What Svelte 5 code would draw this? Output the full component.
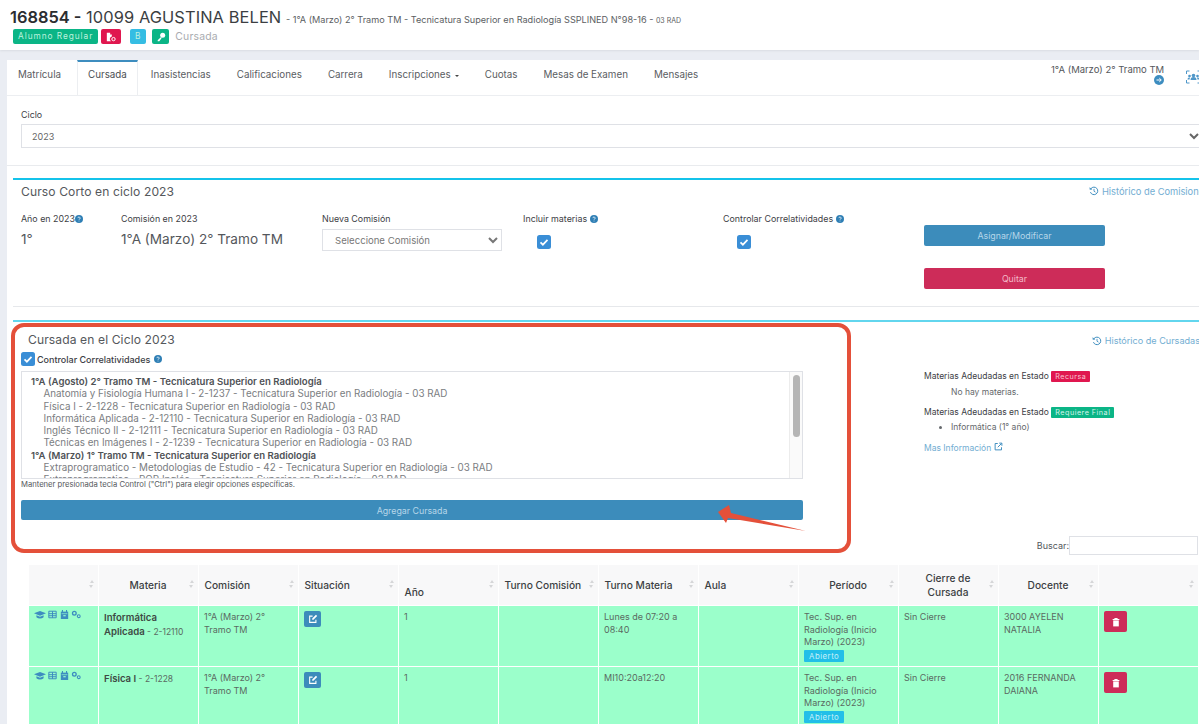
<script>
  const tabs = ['Matrícula','Cursada','Inasistencias','Calificaciones','Carrera','Inscripciones','Cuotas','Mesas de Examen','Mensajes'];
  const groups = [
    ['1°A (Agosto) 2° Tramo TM - Tecnicatura Superior en Radiología', [
      'Anatomía y Fisiología Humana I - 2-1237 - Tecnicatura Superior en Radiología - 03 RAD',
      'Física I - 2-1228 - Tecnicatura Superior en Radiología - 03 RAD',
      'Informática Aplicada - 2-12110 - Tecnicatura Superior en Radiología - 03 RAD',
      'Inglés Técnico II - 2-12111 - Tecnicatura Superior en Radiología - 03 RAD',
      'Técnicas en Imágenes I - 2-1239 - Tecnicatura Superior en Radiología - 03 RAD']],
    ['1°A (Marzo) 1° Tramo TM - Tecnicatura Superior en Radiología', [
      'Extraprogramatico - Metodologias de Estudio - 42 - Tecnicatura Superior en Radiología - 03 RAD',
      'Extraprogramatico - ROP Inglés - Tecnicatura Superior en Radiología - 03 RAD']]
  ];
  const heads = ['', 'Materia', 'Comisión', 'Situación', 'Año', 'Turno Comisión', 'Turno Materia', 'Aula', 'Período', 'Cierre de Cursada', 'Docente', ''];
  const rows = [
    { m: 'Informática', m2: 'Aplicada', code: '2-12110', turno: 'Lunes de 07:20 a 08:40', doc: '3000 AYELEN NATALIA' },
    { m: 'Física I', m2: '', code: '2-1228', turno: 'MI10:20a12:20', doc: '2016 FERNANDA DAIANA' }
  ];
</script>

{#snippet help()}
  <svg class="help" viewBox="0 0 16 16"><circle cx="8" cy="8" r="8" fill="#2f7fb5"/><path d="M5.800 6.200a2.200 2.200 0 1 1 3.300 1.900c-.7.400-1 .7-1 1.500M8 11.400v1.400" stroke="#fff" stroke-width="1.600" fill="none"/></svg>
{/snippet}
{#snippet check()}
  <svg class="check" viewBox="0 0 14 14"><rect width="14" height="14" rx="2.500" fill="#3a8ed6"/><path d="M3.500 7.400l2.400 2.300 4.600-4.800" stroke="#fff" stroke-width="1.700" fill="none"/></svg>
{/snippet}
{#snippet history()}
  <svg class="hist" viewBox="0 0 16 16"><path d="M3.200 4.200A6 6 0 1 1 2.300 9.800" stroke="#3d8dbf" stroke-width="1.600" fill="none"/><path d="M.8 1.800l.4 4.200 4.200-.4z" fill="#3d8dbf"/><path d="M8 4.600v3.800l2.400 1.400" stroke="#3d8dbf" stroke-width="1.400" fill="none"/></svg>
{/snippet}

<div class="page">
  <header class="top">
    <div class="title"><b>168854 -</b> <span class="name">10099 AGUSTINA BELEN</span> <small>- 1°A (Marzo) 2° Tramo TM - Tecnicatura Superior en Radiología SSPLINED N°98-16 - <em>03 RAD</em></small></div>
    <div class="badges">
      <span class="bdg green">Alumno Regular</span>
      <span class="bdg red ic"><svg viewBox="0 0 12 12" width="10" height="10"><path d="M1 1h4v2h2v2.500a3 3 0 0 0-1 5.500H1z" fill="#fff"/><circle cx="9" cy="8.500" r="2" fill="none" stroke="#fff" stroke-width="1.200"/></svg></span>
      <span class="bdg cyan">B</span>
      <span class="bdg green ic key"><svg viewBox="0 0 12 12" width="10" height="10"><circle cx="8" cy="4" r="3" fill="#fff"/><path d="M6 6L2 10v1h2l3-4z" fill="#fff"/></svg></span>
      <span class="crumb">Cursada</span>
    </div>
  </header>

  <main class="card">
    <nav class="tabs">
      {#each tabs as t, i}
        <span class="tab" class:active={i === 1}>{t}{#if t === 'Inscripciones'}<i class="caret"></i>{/if}</span>
      {/each}
      <div class="tabside">
        <div class="ctx">1°A (Marzo) 2° Tramo TM
          <svg class="go" viewBox="0 0 12 12"><circle cx="6" cy="6" r="6" fill="#3d8dc0"/><path d="M3 6h5.500M6.400 3.800L8.700 6 6.400 8.200" stroke="#fff" stroke-width="1.200" fill="none"/></svg>
        </div>
        <svg class="scan" viewBox="0 0 16 14"><path d="M1 4V1h3M12 1h3v3M15 10v3h-3M4 13H1v-3" stroke="#4f97c9" stroke-width="1" fill="none"/><circle cx="8" cy="5.500" r="1.800" fill="#4f97c9"/><circle cx="4" cy="6" r="1.300" fill="#4f97c9"/><circle cx="12" cy="6" r="1.300" fill="#4f97c9"/><path d="M5 10a3 3 0 0 1 6 0zM2 9.500a2 2 0 0 1 2.500-2L4 9.500zM14 9.500a2 2 0 0 0-2.500-2l.5 2z" fill="#4f97c9"/></svg>
      </div>
    </nav>

    <section class="ciclo">
      <label class="lab" for="ciclo">Ciclo</label>
      <select id="ciclo" class="wide"><option>2023</option></select>
    </section>

    <section class="panel short">
      <div class="panelhead"><h3>Curso Corto en ciclo 2023</h3><a class="link over">{@render history()} Histórico de Comisiones</a></div>
      <div class="formgrid">
        <div><div class="lab">Año en 2023{@render help()}</div><div class="val">1°</div></div>
        <div><div class="lab">Comisión en 2023</div><div class="val">1°A (Marzo) 2° Tramo TM</div></div>
        <div><div class="lab">Nueva Comisión</div><select class="sel"><option>Seleccione Comisión</option></select></div>
        <div><div class="lab">Incluir materias {@render help()}</div><div class="ck1">{@render check()}</div></div>
        <div><div class="lab">Controlar Correlatividades {@render help()}</div><div class="ck2">{@render check()}</div></div>
        <div class="actions"><button class="btn blue">Asignar/Modificar</button><button class="btn crimson">Quitar</button></div>
      </div>
    </section>

    <section class="panel cursada">
      <div class="left">
        <h3>Cursada en el Ciclo 2023</h3>
        <div class="lab strong">{@render check()} Controlar Correlatividades {@render help()}</div>
        <div class="list">
          {#each groups as g}
            <div class="grp">{g[0]}</div>
            {#each g[1] as o}<div class="opt">{o}</div>{/each}
          {/each}
          <div class="track"><div class="thumb"></div></div>
        </div>
        <p class="hint">Mantener presionada tecla Control ("Ctrl") para elegir opciones específicas.</p>
        <button class="btn blue add">Agregar Cursada</button>
      </div>
      <div class="right">
        <a class="link histc">{@render history()} Histórico de Cursadas</a>
        <div class="adeu first">Materias Adeudadas en Estado <span class="tag red">Recursa</span></div>
        <div class="none">No hay materias.</div>
        <div class="adeu">Materias Adeudadas en Estado <span class="tag green">Requiere Final</span></div>
        <ul><li>Informática (1° año)</li></ul>
        <a class="link more">Mas Información <svg viewBox="0 0 12 12" width="9" height="9"><path d="M5 2H1.500v8.500H10V7" stroke="#3d8dbf" stroke-width="1.300" fill="none"/><path d="M5 7l5-5M7 1.500h3.500V5" stroke="#3d8dbf" stroke-width="1.300" fill="none"/></svg></a>
      </div>
    </section>

    <div class="search"><span>Buscar:</span><input aria-label="Buscar" /></div>

    <table>
      <thead>
        <tr>
          {#each heads as h, i}
            <th class:low={i === 4} class:lefted={i >= 2 && i <= 7}>{h}<i class="sort"></i></th>
          {/each}
        </tr>
      </thead>
      <tbody>
        {#each rows as r}
          <tr>
            <td class="icons">
              <svg viewBox="0 0 15 11" width="12" height="9"><path d="M7.500 1L15 4 7.500 7 0 4z" fill="#3d8dc0"/><path d="M3 6.500v2.500c2.500 2 6.500 2 9 0V6.500L7.500 8.200z" fill="#3d8dc0"/></svg>
              <svg viewBox="0 0 11 11" width="9" height="9"><path d="M1 1.500h9v8H1zM1 4.500h9M1 7h9M5.500 1.500v8" stroke="#3d8dc0" stroke-width="1.200" fill="none"/></svg>
              <svg viewBox="0 0 11 11" width="9" height="9"><path d="M1 2h9v9H1z" fill="#3d8dc0"/><path d="M3 0v3M8 0v3" stroke="#3d8dc0" stroke-width="1.300"/><path d="M2 4.500h7" stroke="#9fc" stroke-width=".8"/><path d="M4 7h3" stroke="#9fc" stroke-width="1.400"/></svg>
              <svg viewBox="0 0 12 10" width="10" height="9"><circle cx="4" cy="3.500" r="2.200" fill="none" stroke="#3d8dc0" stroke-width="1.600"/><circle cx="9.300" cy="7" r="1.700" fill="none" stroke="#3d8dc0" stroke-width="1.300"/></svg>
            </td>
            <td><b>{r.m}</b>{#if r.m2}<br /><b>{r.m2}</b>{/if}<span class="code">{' - '}{r.code}</span></td>
            <td>1°A (Marzo) 2° Tramo TM</td>
            <td><span class="sq blue"><svg viewBox="0 0 12 12" width="10" height="10"><path d="M9.500 7v3H2V2.500h3.500" stroke="#fff" stroke-width="1.300" fill="none"/><path d="M5 5.500L9.500 1l1.500 1.500L6.500 7H5z" fill="#fff"/></svg></span></td>
            <td>1</td>
            <td></td>
            <td>{r.turno}</td>
            <td></td>
            <td>Tec. Sup. en Radiología (Inicio Marzo) (2023)<br /><span class="tag open">Abierto</span></td>
            <td>Sin Cierre</td>
            <td>{r.doc}</td>
            <td><span class="sq crim"><svg viewBox="0 0 10 12" width="8" height="10"><path d="M3 1.500h4M0.800 3h8.400" stroke="#fff" stroke-width="1.300"/><path d="M1.500 4h7v7.500h-7z" fill="#fff"/></svg></span></td>
          </tr>
        {/each}
      </tbody>
    </table>

    <svg class="mark" viewBox="0 0 90 28" aria-hidden="true"><path d="M0 7 L11 0 L13 8 L88 26 L10 13 L8 18 Z" fill="#e4503a"/></svg>
    <div class="redbox"></div>
  </main>
</div>

<style>
  :global(html), :global(body) { margin: 0; height: 724px; overflow: hidden; background: #eaedf3; }
  .page { font-family: "Inter", "Noto Sans", sans-serif; color: #54575c; font-size: 9px; height: 724px; overflow: hidden; }
  header.top { background: #fff; height: 50px; box-sizing: border-box; padding: 7px 10px 0; box-shadow: 0 1px 2px #d9dce2; }
  .title { color: #3b3e42; font-size: 16.400px; line-height: 20px; white-space: nowrap; }
  .title b { font-weight: 600; color: #2b2d30; }
  .title .name { font-weight: 400; letter-spacing: .1px; }
  .title small { font-size: 9.150px; color: #5b5e62; }
  .title em { font-style: normal; font-size: 7px; }
  .badges { display: flex; align-items: center; margin: -2px 0 0 3px; gap: 3px; height: 15px; }
  .bdg { height: 15px; border-radius: 2px; color: #bff2de; font-size: 8.300px; line-height: 15px; padding: 0 5px; letter-spacing: .95px; box-sizing: border-box; }
  .bdg.ic { display: flex; align-items: center; justify-content: center; padding: 0; width: 17px; }
  .bdg.green { background: #0bb586; }
  .bdg.red { background: #e0174f; margin-right: 6px; width: 20px; }
  .bdg.cyan { background: #35bde3; width: 16px; padding: 0; text-align: center; margin-right: 3px; }
  .crumb { color: #a9acb0; font-size: 10.400px; margin-left: 3px; letter-spacing: .2px; }

  main.card { position: relative; background: #fff; margin: 10px 0 0 7px; height: 664px; }
  .tabs { display: flex; height: 35px; border-bottom: 1px solid #eceef1; font-size: 9.800px; position: relative; }
  .tab { height: 32px; line-height: 26px; padding: 0 13px; border-top: 2px solid transparent; white-space: nowrap; color: #5a5d62; }
  .tab:first-child { padding: 0 16px 0 11px; }
  .tab.active { border-top-color: #3d8dbf; border-left: 1px solid #eceef1; border-right: 1px solid #eceef1; height: 33px; background: #fff; color: #4c4f54; padding: 0 10px; }
  .caret { display: inline-block; margin-left: 4px; vertical-align: 1px; border: 2.500px solid transparent; border-top-color: #444; border-bottom: 0; }
  .tabside { margin-left: auto; display: flex; align-items: flex-start; padding-top: 4px; gap: 21px; margin-right: -3px; }
  .ctx { width: 113px; text-align: right; line-height: 11px; font-size: 9.500px; color: #55585c; white-space: nowrap; }
  .go { display: block; width: 10px; height: 10px; margin: 0 0 0 auto; }
  .scan { width: 17px; height: 14px; margin-top: 6px; }

  .ciclo { padding: 13px 0 0 14px; height: 56px; border-bottom: 1px solid #e9ebee; margin-bottom: 12px; }
  .lab { display: block; font-size: 8.900px; color: #3d4045; line-height: 11px; white-space: nowrap; }
  .wide { display: block; width: 1182px; margin-top: 4px; height: 24px; border: 1px solid #dfe1e6; background: #fff; font: inherit; color: #666; padding-left: 6px; box-sizing: border-box; }

  .panel { border-top: 2px solid #14c3ea; margin-left: 6px; }
  .panelhead { display: flex; justify-content: space-between; padding: 0 0 0 8px; height: 22px; align-items: center; }
  h3 { margin: 0; font-weight: 400; font-size: 12.100px; color: #55585c; letter-spacing: .1px; }
  .link { color: #72add2; font-size: 9.300px; white-space: nowrap; }
  .over { margin-right: 0; }
  .hist { width: 10px; height: 10px; vertical-align: -1.500px; }
  .help { width: 8px; height: 8px; vertical-align: -.500px; }
  .check { width: 14px; height: 14px; display: block; }

  .formgrid { display: grid; grid-template-columns: 100px 201px 201px 200px 201px 181px; padding: 11px 0 0 8px; height: 90px; }
  .val { font-size: 13.600px; color: #54575c; margin-top: 6px; line-height: 18px; }
  .sel { display: block; margin-top: 5px; width: 180px; height: 22px; border: 1px solid #dfe1e6; background: #fff; font: inherit; font-size: 9.600px; color: #777; padding-left: 8px; box-sizing: border-box; }
  .ck1 { margin: 11px 0 0 14px; }
  .ck2 { margin: 11px 0 0 14px; }
  .actions { display: flex; flex-direction: column; gap: 22px; padding-top: 12px; }
  .btn { display: block; border: 0; border-radius: 2px; font: inherit; font-size: 8.800px; height: 21px; width: 181px; padding: 0; }
  .blue { background: #3c8cbb; color: #b6d6e9; }
  .crimson { background: #cd2c59; color: #f3b9c8; }
  .short { border-bottom: 1px solid #e6e8eb; margin-bottom: 13px; margin-right: -10px; height: 126px; }

  .cursada { display: grid; grid-template-columns: 911px 1fr; border-top-color: #62d6ee; margin-right: -10px; height: 214px; }
  .left { padding: 0 0 0 8px; position: relative; }
  .left h3 { padding: 10px 0 0 7px; line-height: 16px; }
  .strong { display: flex; align-items: center; gap: 2px; margin: 4px 0 0 0; height: 14px; font-weight: 500; font-size: 9px; }
  .strong .help { margin-left: 2px; }
  .list { position: relative; width: 782px; height: 108px; border: 1px solid #dfe1e6; margin-top: 5px; padding: 4px 0 0 9px; box-sizing: border-box; overflow: hidden; font-size: 9.800px; line-height: 12.300px; color: #7a7d81; white-space: nowrap; }
  .grp { font-weight: 600; color: #4e5155; font-size: 9.600px; }
  .opt { padding-left: 12.500px; }
  .track { position: absolute; right: 0; top: 0; bottom: 0; width: 12px; background: #fafafa; border-left: 1px solid #ececec; }
  .thumb { position: absolute; left: 3px; top: 3px; width: 7px; height: 62px; background: #b5b5b5; border-radius: 4px; }
  .hint { margin: 1px 0 0; font-size: 7.650px; line-height: 10px; color: #55585c; }
  .add { width: 782px; margin-top: 10px; height: 20px; }
  .right { position: relative; color: #55585c; font-size: 8.500px; }
  .histc { position: absolute; right: 9px; top: 13px; white-space: nowrap; font-size: 9.100px; }
  .adeu { line-height: 12px; color: #3d4045; margin-top: 8px; }
  .adeu.first { margin-top: 48px; }
  .none { padding-left: 27px; line-height: 12px; margin-top: 4px; color: #65686c; }
  ul { margin: 3px 0 0; padding: 0 0 0 27px; line-height: 12px; color: #65686c; }
  .more { display: block; font-size: 8.500px; margin-top: 9px; }
  .tag { display: inline-block; color: #d5f4ea; font-size: 7.200px; letter-spacing: .5px; padding: 0 4px; line-height: 11px; border-radius: 1px; }
  .tag.red { background: #e0174f; color: #f8c4d1; }
  .tag.green { background: #0bb586; }
  .tag.open { background: #22bfe8; padding: 0 5px; line-height: 12px; color: #c6f0fa; font-size: 7.800px; margin-top: 1px; }

  .search { display: flex; justify-content: flex-end; align-items: center; height: 20px; margin: -1px 1px 9px 0; font-size: 9px; }
  .search input { width: 129px; height: 19px; border: 1px solid #dfe1e6; padding: 0; box-sizing: border-box; }

  table { border-collapse: collapse; table-layout: fixed; width: 1171px; margin-left: 20.500px; font-size: 9px; }
  th:first-child, td:first-child { width: 70px; }
  th, td { width: 100px; box-sizing: border-box; border: 1px solid #fff; }
  th { position: relative; height: 41px; background: #f8f8f9; font-weight: 500; color: #3c3f43; font-size: 10.200px; line-height: 14px; padding: 0 6px; text-align: center; }
  th.lefted { text-align: left; }
  th.low { padding-top: 14px; }
  .sort { position: absolute; right: 4px; top: 15px; border: 2.500px solid transparent; border-bottom: 3.500px solid #d5d6d8; border-top: 0; }
  .sort::after { content: ''; position: absolute; left: -2.500px; top: 5px; border: 2.500px solid transparent; border-top: 3.500px solid #d5d6d8; border-bottom: 0; }
  td { background: #9bffcb; height: 61px; vertical-align: top; padding: 5px 5.500px 0; line-height: 12.700px; font-size: 9px; color: #5a6a62; }
  td b { font-weight: 600; font-size: 9.600px; color: #3e4a44; line-height: 14px; }
  .code { font-size: 8.500px; }
  td.icons { padding: 4px 0 0 5px; white-space: nowrap; line-height: 9px; }
  td.icons svg { vertical-align: top; }
  .sq { display: inline-flex; align-items: center; justify-content: center; border-radius: 2px; height: 16px; width: 17px; }
  .sq.blue { background: #3c8cbb; }
  .sq.crim { background: #cd2c59; width: 23px; height: 21px; }

  .redbox { position: absolute; left: 4px; top: 263px; width: 840px; height: 230px; box-sizing: border-box; border: 4px solid #e4503a; border-radius: 13px; pointer-events: none; }
  .mark { position: absolute; left: 711px; top: 445px; width: 90px; height: 28px; }
</style>
